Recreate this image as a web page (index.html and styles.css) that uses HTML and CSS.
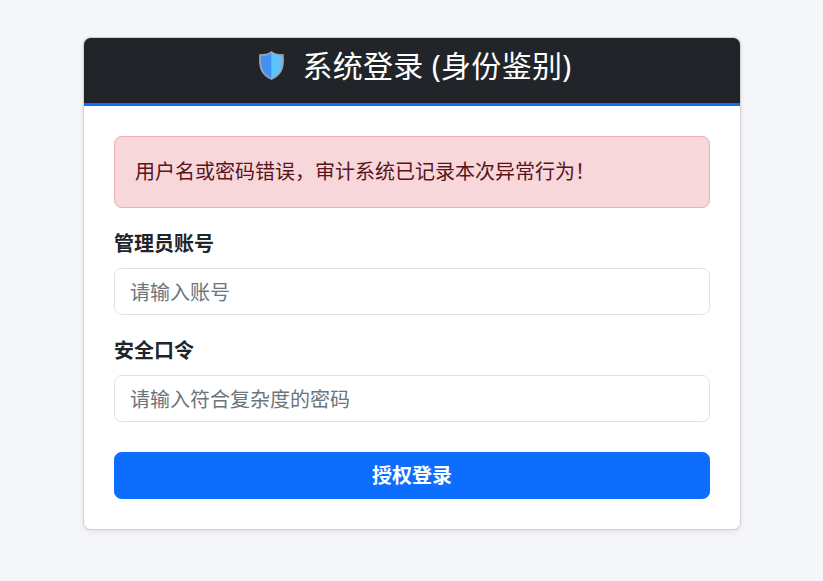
FILE: index.html
```html
<!DOCTYPE html>
<html lang="zh-CN">
<head>
<meta charset="utf-8">
<title>系统登录</title>
<link rel="stylesheet" href="styles.css">
</head>
<body>
<main class="card">
  <header class="card-header">
    <svg class="shield" viewBox="1 1 24 28.2" width="25" height="29" aria-hidden="true">
      <path d="M13 1 C10 3.4 6 4.4 1.2 4 C0.6 10 0.8 16 3 20.5 C5 24.5 8.5 27.3 13 29.2 C17.5 27.3 21 24.5 23 20.5 C25.2 16 25.4 10 24.8 4 C20 4.4 16 3.4 13 1 Z" fill="#9aa4b2"/>
      <path d="M13 3 C10.4 5 6.8 6 2.9 5.8 C2.5 11 2.8 15.8 4.6 19.6 C6.4 23.2 9.2 25.6 13 27.2 Z" fill="#3f93f5"/>
      <path d="M13 3 C15.6 5 19.2 6 23.1 5.8 C23.5 11 23.2 15.8 21.4 19.6 C19.6 23.2 16.8 25.6 13 27.2 Z" fill="#5cc3ff"/>
    </svg>
    <h1 class="title">系统登录 (身份鉴别)</h1>
  </header>
  <div class="card-body">
    <div class="alert">用户名或密码错误，审计系统已记录本次异常行为！</div>
    <form class="form">
      <div class="group">
        <label class="label" for="user">管理员账号</label>
        <input class="input" id="user" type="text" placeholder="请输入账号">
      </div>
      <div class="group group-last">
        <label class="label" for="pass">安全口令</label>
        <input class="input" id="pass" type="password" placeholder="请输入符合复杂度的密码">
      </div>
      <button class="btn" type="button">授权登录</button>
    </form>
  </div>
</main>
</body>
</html>
```

FILE: styles.css
```css
* {
  box-sizing: border-box;
}

html,
body {
  margin: 0;
  height: 100%;
}

body {
  display: flex;
  justify-content: center;
  align-items: flex-start;
  padding-top: 37px;
  padding-left: 1px;
  background: #f4f6f9;
  color: #212529;
  font-family: "Noto Sans", "Noto Sans CJK SC", sans-serif;
  font-size: 20px;
  line-height: 30px;
  overflow: hidden;
}

.card {
  width: 658px;
  height: 493px;
  background: #fff;
  border: 1px solid rgba(0, 0, 0, 0.18);
  border-radius: 7.5px;
  box-shadow: 0 2px 5px rgba(0, 0, 0, 0.08);
  overflow: hidden;
}

.card-header {
  display: flex;
  justify-content: center;
  align-items: center;
  gap: 18px;
  height: 68px;
  padding-left: 7px;
  padding-bottom: 10px;
  background: #212529;
  border-bottom: 3px solid #0d6efd;
  color: #fff;
}

.shield {
  flex: none;
}

.title {
  margin: 0;
  font-size: 30px;
  font-weight: 400;
  line-height: 36px;
  letter-spacing: 0.3px;
}

.card-body {
  padding: 30px;
}

.alert {
  height: 72px;
  padding: 20px;
  margin-bottom: 20px;
  background: #f8d7da;
  border: 1px solid #f1aeb5;
  border-radius: 7.5px;
  color: #58151c;
}

.group {
  margin-bottom: 20px;
}

.group-last {
  margin-bottom: 30px;
}

.label {
  display: block;
  margin-bottom: 8px;
  font-weight: 700;
  line-height: 32px;
}

.input {
  display: block;
  width: 100%;
  height: 47px;
  padding: 2px 15px 0;
  background: #fff;
  border: 1px solid #dee2e6;
  border-radius: 7.5px;
  color: #212529;
  font: inherit;
}

.input::placeholder {
  color: #6c757d;
  opacity: 1;
}

.btn {
  display: block;
  width: 100%;
  height: 47px;
  padding: 0;
  background: #0d6efd;
  border: 1px solid #0d6efd;
  border-radius: 7.5px;
  color: #fff;
  font: inherit;
  font-weight: 700;
}
```
